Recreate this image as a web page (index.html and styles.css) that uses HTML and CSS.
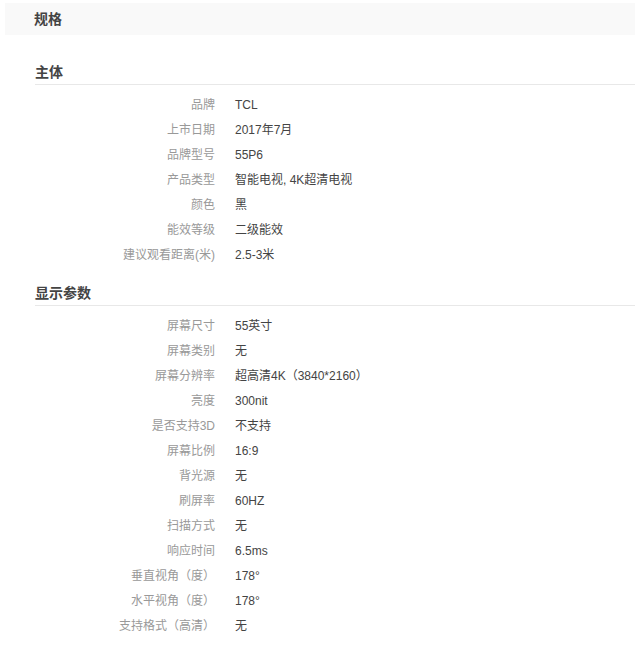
FILE: index.html
```html
<!DOCTYPE html>
<html lang="zh-CN">
<head>
    <meta charset="UTF-8">
    <meta name="viewport" content="width=device-width, initial-scale=1.0">
    <title>规格</title>
    <link rel="stylesheet" href="styles.css">
</head>
<body>
    <div class="page">
        <div class="title">规格</div>

        <div class="section">
            <h3>主体</h3>
            <dl class="params">
                <dt>品牌</dt><dd>TCL</dd>
                <dt>上市日期</dt><dd>2017年7月</dd>
                <dt>品牌型号</dt><dd>55P6</dd>
                <dt>产品类型</dt><dd>智能电视, 4K超清电视</dd>
                <dt>颜色</dt><dd>黑</dd>
                <dt>能效等级</dt><dd>二级能效</dd>
                <dt>建议观看距离(米)</dt><dd>2.5-3米</dd>
            </dl>
        </div>

        <div class="section">
            <h3>显示参数</h3>
            <dl class="params">
                <dt>屏幕尺寸</dt><dd>55英寸</dd>
                <dt>屏幕类别</dt><dd>无</dd>
                <dt>屏幕分辨率</dt><dd>超高清4K（3840*2160）</dd>
                <dt>亮度</dt><dd>300nit</dd>
                <dt>是否支持3D</dt><dd>不支持</dd>
                <dt>屏幕比例</dt><dd>16:9</dd>
                <dt>背光源</dt><dd>无</dd>
                <dt>刷屏率</dt><dd>60HZ</dd>
                <dt>扫描方式</dt><dd>无</dd>
                <dt>响应时间</dt><dd>6.5ms</dd>
                <dt>垂直视角（度）</dt><dd>178°</dd>
                <dt>水平视角（度）</dt><dd>178°</dd>
                <dt>支持格式（高清）</dt><dd>无</dd>
            </dl>
        </div>
    </div>
</body>
</html>
```

FILE: styles.css
```css
body {
    margin: 0;
    font-family: "Liberation Sans", Arial, "Noto Sans CJK SC", sans-serif;
    font-size: 12px;
    color: #444;
    background: #fff;
}
.page {
    padding: 3px 0 0 5px;
}
.title {
    height: 32px;
    line-height: 32px;
    margin-bottom: 25px;
    padding-left: 29px;
    background-color: #f9f9f9;
    font-size: 14px;
    font-weight: bold;
    color: #444;
}
.section {
    margin-left: 30px;
}
.section h3 {
    margin: 0;
    height: 24px;
    line-height: 24px;
    font-size: 14px;
    font-weight: bold;
    color: #444;
    border-bottom: 1px solid #e8e8e8;
}
.params {
    display: grid;
    grid-template-columns: 180px 1fr;
    column-gap: 20px;
    margin: 0;
    padding: 8px 0 13px;
}
.params dt,
.params dd {
    margin: 0;
    height: 25px;
    line-height: 25px;
}
.params dt {
    text-align: right;
    color: #999;
}
.params dd {
    color: #444;
}
```
